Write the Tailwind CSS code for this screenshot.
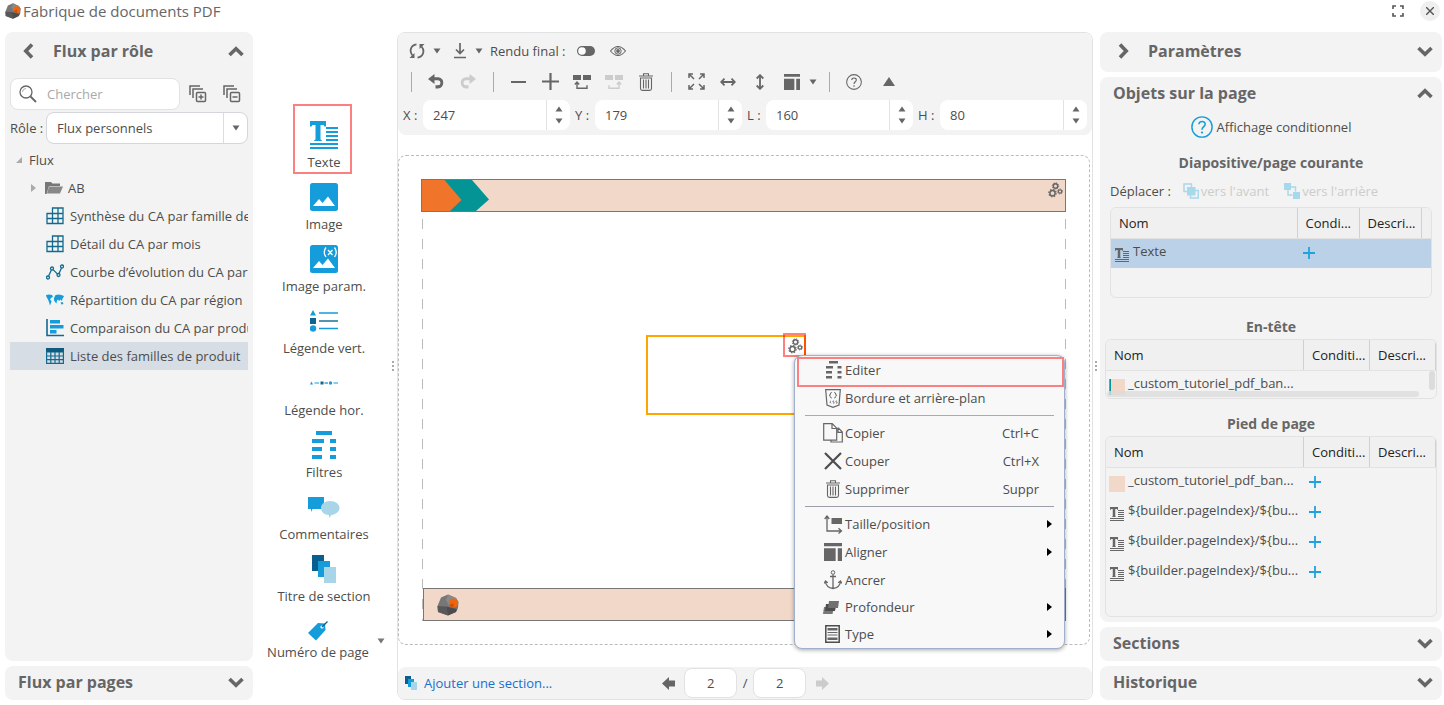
<!DOCTYPE html>
<html lang="fr">
<head>
<meta charset="utf-8">
<title>Fabrique de documents PDF</title>
<script src="https://cdn.jsdelivr.net/npm/@tailwindcss/browser@4"></script>
</head>
<body class="h-screen overflow-hidden bg-white font-['Open_Sans','Noto_Sans',sans-serif] text-[13px] leading-5 text-[#4d4d4d]">

<svg class="hidden" aria-hidden="true">
  <symbol id="cube" viewBox="0 0 22 22"><path fill="#777" d="M4 3.500 11 .5l8 3.500 2.500 4L21 14l-2 4-8 3.500L1 18 .5 12z"/><path fill="#8a8a8a" d="M11 .5 19 4l2.500 4-9 4.500L9 6z"/><path fill="#585858" d="M.5 12 9 12.500l2 9L1 18z"/><path fill="#4c4c4c" d="M9 12.500 20 15l-1 3-8 3.500z"/><circle cx="16.500" cy="9" r="4.600" fill="#ee6510"/><path fill="#c94f0a" d="M16.500 9v4.600A4.600 4.600 0 0 1 12.300 11z"/></symbol>
  <symbol id="up" viewBox="0 0 16 11"><path d="M1.500 9 8 2.800 14.500 9" fill="none" stroke="currentColor" stroke-width="3.600"/></symbol>
  <symbol id="down" viewBox="0 0 16 11"><path d="M1.500 2 8 8.200 14.500 2" fill="none" stroke="currentColor" stroke-width="3.600"/></symbol>
  <symbol id="left" viewBox="0 0 11 16"><path d="M9 1.500 2.800 8 9 14.500" fill="none" stroke="currentColor" stroke-width="3.600"/></symbol>
  <symbol id="right" viewBox="0 0 11 16"><path d="M2 1.500 8.200 8 2 14.500" fill="none" stroke="currentColor" stroke-width="3.600"/></symbol>
  <symbol id="tri-down" viewBox="0 0 8 6"><path d="M.5.5h7L4 5.500z" fill="currentColor"/></symbol>
  <symbol id="tri-up" viewBox="0 0 8 6"><path d="M.5 5.500h7L4 .5z" fill="currentColor"/></symbol>
  <symbol id="tri-right" viewBox="0 0 5 8"><path d="M0 0 5 4 0 8z" fill="currentColor"/></symbol>
  <symbol id="stack" viewBox="0 0 18 18"><g fill="none" stroke="currentColor" stroke-width="1.500"><path d="M1 10V1h10M4 13V4h10"/><rect x="7.500" y="7.500" width="9" height="9" rx="1"/></g></symbol>
  <symbol id="cubegrid" viewBox="0 0 18 18"><path fill="none" stroke="#126a8e" stroke-width="1.300" d="M6.500 1h10.500v15.500H1V6.500h5.500zM1 11.500h16M6.500 6.500H17M6.500 6.500v10M12 1v15.500"/></symbol>
  <symbol id="curve" viewBox="0 0 18 16"><g fill="none" stroke="#126a8e" stroke-width="1.300"><circle cx="2" cy="13.500" r="1.500"/><circle cx="6" cy="4.500" r="1.500"/><circle cx="12.500" cy="11" r="1.500"/><circle cx="16" cy="2.500" r="1.500"/><path d="M2.600 12 5.400 6M7 5.600l4.400 4.300M13 9.500l2.500-5.500"/></g></symbol>
  <symbol id="map" viewBox="0 0 18 12"><path fill="#149dda" d="M0 1 3 .5 6 1 7 2.500 5 4 4 5.500 5.500 7 5 9 4 11.500 3 8 2 5.500.5 3zM8 4l1.500-3L13 .5l4 1 1 1-1.500 2L16 7l-1.500-1.500L13 7 12 5.500 11 6.500 10.500 9.500 9 8 8 6zM14.500 8.500l2-.5 1 2-2 .5z"/></symbol>
  <symbol id="bars" viewBox="0 0 18 18"><path d="M1 0v16.500h17" fill="none" stroke="#126a8e" stroke-width="1.600"/><path fill="#149dda" d="M4 1h10v3.500H4zM4 6h13.500v3.500H4zM4 11h6.500v3.500H4z"/></symbol>
  <symbol id="table" viewBox="0 0 18 16"><path fill="#0d5c80" d="M0 0h18v4.500H0z"/><path fill="none" stroke="#126a8e" stroke-width="1.200" d="M.6 3v12.400h16.800V3M.6 8h16.800M.6 11.700h16.800M4.800 4v12M9 4v12M13.200 4v12"/></symbol>
  <symbol id="text" viewBox="0 0 28 28"><path fill="currentColor" d="M0 0h16v5.500h-1.500L13.500 4h-3v14.500l1.500 1V20H4v-.5l1.500-1V4h-3L1.500 5.500H0zM16 6h12v2H16zM16 10h12v2H16zM16 14h12v2H16zM16 18h12v2H16zM0 22h28v2H0zM0 26h28v2H0z"/></symbol>
  <symbol id="image" viewBox="0 0 28 28"><rect width="28" height="28" rx="2.500" fill="#149dda"/><path fill="#fff" d="m3 23 6-7 3.500 4L18 13.500 25 23z"/></symbol>
  <symbol id="filter" viewBox="0 0 24 28"><path fill="currentColor" d="M4 0h16v4H4zM0 8h12v4H0zM0 16h10v4H0zM0 24h10v4H0zM18 8h6v4h-6zM18 16h6v4h-6zM18 24h6v4h-6z"/></symbol>
  <symbol id="pages" viewBox="0 0 24 28"><path fill="#09608f" d="M0 0h12v16H0z"/><path fill="#149dda" d="M6 6h12v16H6z"/><path fill="#a8d5e8" d="M12 12h12v16H12z"/></symbol>
  <symbol id="undo" viewBox="0 0 16 15"><path fill="currentColor" d="M0 5 6.500 0v3.200h4A5.700 5.700 0 0 1 10 14.500H7.500V11.300H10a2.500 2.500 0 0 0 0-5H6.500V10z"/></symbol>
  <symbol id="split" viewBox="0 0 18 14"><path fill="currentColor" d="M0 0h8v5H0zM10 0h8v5h-8z"/><path fill="none" stroke="currentColor" stroke-width="1.400" d="M4 8.500v4.800h10v-3M1.800 9.500 4 7l2.200 2.500"/></symbol>
  <symbol id="trash" viewBox="0 0 14 18"><g fill="none" stroke="currentColor" stroke-width="1.100"><path d="M0 3h14M4.500 2.800V.7h5v2.100M1.500 5h11v10.500q0 1.900-1.900 1.900H3.400q-1.900 0-1.900-1.900zM4.500 6.500v9M7 6.500v9M9.500 6.500v9"/></g></symbol>
  <symbol id="align" viewBox="0 0 17 17"><path fill="currentColor" d="M0 0h17v3H0zM0 5h11v12H0zM13 5h4v12h-4z"/></symbol>
  <symbol id="help" viewBox="0 0 20 20"><circle cx="10" cy="10" r="9.200" fill="none" stroke="currentColor" stroke-width="1.300"/><path fill="none" stroke="currentColor" stroke-width="1.400" d="M7.200 7.500c0-3.500 5.800-3.300 5.700 0 0 2.200-2.900 2.300-2.900 5"/><circle cx="10" cy="15" r="1" fill="currentColor"/></symbol>
  <symbol id="gears" viewBox="0 0 16 16"><g fill="none" stroke="currentColor"><circle cx="7.500" cy="4" r="2.200" stroke-width="1.400"/><circle cx="7.500" cy="4" r="3.200" stroke-width="1" stroke-dasharray="1.260 1.260"/><circle cx="4.500" cy="11.200" r="2.600" stroke-width="1.500"/><circle cx="4.500" cy="11.200" r="3.700" stroke-width="1.200" stroke-dasharray="1.450 1.450"/><circle cx="12" cy="9.500" r="1.700" stroke-width="1.200"/><circle cx="12" cy="9.500" r="2.500" stroke-width="1" stroke-dasharray=".980 .980"/></g></symbol>
  <symbol id="arrow-left" viewBox="0 0 13 13"><path fill="currentColor" d="M0 6.500 7 0v3.500h6v6H7V13z"/></symbol>
  <symbol id="plus" viewBox="0 0 12 12"><path d="M6 0v12M0 6h12" stroke="#1fa3de" stroke-width="1.800"/></symbol>
</svg>

<div class="flex h-full flex-col pb-[5px]">
  <header class="flex h-8 shrink-0 items-start justify-between pl-[5px] pr-1">
    <h1 class="flex items-center gap-[2px] text-[15px] leading-[22px] text-[#666]"><svg class="size-4"><use href="#cube"/></svg>Fabrique de documents PDF</h1>
    <div class="flex items-center gap-4 pt-[1px]">
      <button aria-label="Plein écran"><svg class="size-3" viewBox="0 0 12 12"><path d="M1 4V1h3M8 1h3v3M11 8v3H8M4 11H1V8" fill="none" stroke="#555" stroke-width="1.600"/></svg></button>
      <button aria-label="Fermer" class="flex size-5 items-center justify-center rounded-full bg-[#efefef]"><svg class="size-2" viewBox="0 0 8 8"><path d="m0 0 8 8M8 0 0 8" stroke="#555" stroke-width="1.400"/></svg></button>
    </div>
  </header>

  <main class="flex min-h-0 flex-1 pl-[5px] pr-[2px]">
    <!-- Flows -->
    <aside class="flex w-[248px] shrink-0 flex-col gap-[5px]">
      <section class="flex min-h-0 flex-1 flex-col rounded-lg bg-[#f3f3f3] px-[5px]">
        <div class="flex h-[38px] shrink-0 items-center pl-[13px] pr-1 text-[#666]">
          <button aria-label="Retour"><svg class="h-4 w-[11px]"><use href="#left"/></svg></button>
          <h2 class="ml-[19px] flex-1 text-base font-bold">Flux par rôle</h2>
          <button aria-label="Replier"><svg class="h-[11px] w-4"><use href="#up"/></svg></button>
        </div>
        <div class="mt-2 flex items-center text-[#666]">
          <label class="flex h-8 w-[170px] items-center rounded-lg border border-[#e2e2e2] bg-white pl-2">
            <svg class="size-[18px] shrink-0" viewBox="0 0 18 18"><circle cx="7" cy="7" r="6" fill="none" stroke="currentColor" stroke-width="1.300"/><path d="M3.500 7A3.500 3.500 0 0 1 7 3.500" fill="none" stroke="#aaa"/><path d="m11.500 11.500 5.500 5.500" stroke="currentColor" stroke-width="1.800"/></svg>
            <input type="text" aria-label="Chercher" placeholder="Chercher" class="ml-[10px] w-28 outline-none placeholder:text-[#a9a9a9]">
          </label>
          <button aria-label="Tout déplier" class="ml-[9px]"><svg class="size-[18px]"><use href="#stack"/><path d="M9.500 12h5M12 9.500v5" stroke="currentColor" stroke-width="1.500"/></svg></button>
          <button aria-label="Tout replier" class="ml-4"><svg class="size-[18px]"><use href="#stack"/><path d="M9.500 12h5" stroke="currentColor" stroke-width="1.500"/></svg></button>
        </div>
        <div class="mt-[2px] flex items-center">
          <label for="role" class="w-9">Rôle :</label>
          <div class="relative flex-1">
            <select id="role" class="block h-8 w-full appearance-none rounded-lg border border-[#d5d5dc] bg-white pl-[10px] text-[#4d4d4d]"><option>Flux personnels</option></select>
            <span class="pointer-events-none absolute inset-y-px right-px flex w-6 items-center justify-center border-l border-[#ddd] text-[#666]"><svg class="h-[6px] w-2"><use href="#tri-down"/></svg></span>
          </div>
        </div>
        <ul class="mt-[2px] overflow-hidden whitespace-nowrap [&>li]:flex [&>li]:h-7 [&>li]:items-center">
          <li class="pl-[6px]"><svg class="mr-[7px] size-[6px]" viewBox="0 0 6 6"><path d="M6 0v6H0z" fill="#aaa"/></svg>Flux</li>
          <li class="pl-[21px]"><svg class="mr-[9px] h-2 w-[5px] text-[#aaa]"><use href="#tri-right"/></svg><svg class="mr-[5px] h-3 w-[18px]" viewBox="0 0 18 12"><path fill="#777" d="M0 0h6l1.500 1.500H15V4H4L1.500 12H0z"/><path fill="#888" d="M4 4.500h14L15 11.500H2z"/></svg>AB</li>
          <li class="gap-[6px] pl-9"><svg class="size-[18px] shrink-0"><use href="#cubegrid"/></svg>Synthèse du CA par famille de produit</li>
          <li class="gap-[6px] pl-9"><svg class="size-[18px] shrink-0"><use href="#cubegrid"/></svg>Détail du CA par mois</li>
          <li class="gap-[6px] pl-9"><svg class="h-4 w-[18px] shrink-0"><use href="#curve"/></svg>Courbe d’évolution du CA par mois</li>
          <li class="gap-[6px] pl-9"><svg class="h-3 w-[18px] shrink-0"><use href="#map"/></svg>Répartition du CA par région</li>
          <li class="gap-[6px] pl-9"><svg class="size-[18px] shrink-0"><use href="#bars"/></svg>Comparaison du CA par produit</li>
          <li class="gap-[6px] bg-[#d6dde5] pl-9"><svg class="h-4 w-[18px] shrink-0"><use href="#table"/></svg>Liste des familles de produit</li>
        </ul>
      </section>
      <section class="flex h-[34px] shrink-0 items-center justify-between rounded-lg bg-[#f3f3f3] pb-[2px] pl-[13px] pr-[9px] text-[#666]">
        <h2 class="text-base font-bold">Flux par pages</h2>
        <button aria-label="Déplier"><svg class="h-[11px] w-4"><use href="#down"/></svg></button>
      </section>
    </aside>

    <!-- Object palette -->
    <nav aria-label="Objets" class="relative w-[142px] shrink-0 pt-[79px] [&>button]:flex [&>button]:w-full [&>button]:flex-col [&>button]:items-center [&>button]:gap-[3px] [&>button]:pt-[10px] [&>button]:pb-px">
      <button><svg class="size-7 text-[#149dda]"><use href="#text"/></svg>Texte</button>
      <button><svg class="size-7"><use href="#image"/></svg>Image</button>
      <button><svg class="size-7"><use href="#image"/><g fill="none" stroke="#fff" stroke-width="1.300"><path d="M16 2.500q-3.500 4.500 0 9.500M24.500 2.500q3.500 4.500 0 9.500M18 5l4.500 5M22.500 5 18 10"/></g></svg>Image param.</button>
      <button><svg class="size-7" viewBox="0 0 28 28"><path fill="#149dda" d="m3 3 3 5.500H0z"/><path fill="#0b678f" d="M0 11h6v6H0z"/><circle cx="3" cy="21.500" r="3.200" fill="#149dda"/><path d="M9 6h20M9 21.500h20" stroke="#149dda" stroke-width="1.400"/><path d="M9 14h20" stroke="#0b678f" stroke-width="1.400"/></svg>Légende vert.</button>
      <button><svg class="size-7" viewBox="0 0 28 28"><path fill="#149dda" d="m1.500 12.500 1.500 3H0z"/><path fill="#0b678f" d="M10.500 12.500h3v3h-3z"/><circle cx="20.500" cy="14" r="1.700" fill="#149dda"/><path d="M4.500 14H9M23.500 14H28" stroke="#149dda"/><path d="M14.500 14H18" stroke="#0b678f"/></svg>Légende hor.</button>
      <button><svg class="h-7 w-6 text-[#149dda]"><use href="#filter"/></svg>Filtres</button>
      <button><svg class="h-7 w-8" viewBox="0 0 32 28"><path fill="#149dda" d="M0 4h16v12H4.500L3 19v-3H0z"/><path fill="#a8d5e8" d="M22 8c5.500 0 9.500 3 9.500 7S27.500 21.500 23.500 22L21 25v-3c-4.500 0-8-3-8-7s4-7 9-7z"/></svg>Commentaires</button>
      <button><svg class="h-7 w-6"><use href="#pages"/></svg>Titre de section</button>
      <button class="pr-3"><svg class="mt-1 size-5" viewBox="0 0 20 20"><path fill="#149dda" d="M0 12 10 2l7 .5.500 6.500L8 19.500z"/><circle cx="14" cy="6" r="1.600" fill="#fff"/><path d="m14 6 5.500-5.500" stroke="#09608f" stroke-width="1.300"/></svg><span class="-mt-[2px]">Numéro de page</span></button>
      <span aria-hidden="true" class="absolute left-10 top-[72px] h-[70px] w-[59px] border-2 border-[#fd8080]"></span>
      <svg class="absolute left-[124px] top-[606px] h-[6px] w-2 text-[#777]"><use href="#tri-down"/></svg>
      <svg class="absolute right-[1px] top-[329px] h-[11px] w-[3px]" viewBox="0 0 3 11"><path fill="#aaa" d="M1 0h2v2H1zM1 4h2v2H1zM1 8h2v2H1z"/></svg>
    </nav>

    <!-- Editor -->
    <section class="ml-[2px] flex min-w-0 flex-1 flex-col rounded-lg border border-[#e2e2e2]">
      <div class="rounded-lg bg-[#f3f3f3] text-[#666]">
        <div class="flex h-[35px] items-center pl-[11px]">
          <button aria-label="Actualiser"><svg class="size-4" viewBox="0 0 16 16"><g fill="none" stroke="currentColor" stroke-width="1.800"><path d="M7.500 1.300C1.500 2 0 8.500 3.500 12.500M8.500 14.700C14.500 14 16 7.500 12.500 3.500"/></g><path fill="currentColor" d="M.5 15 5.500 10v5zM15.500 1l-5 5V1z"/></svg></button>
          <svg class="ml-2 h-[6px] w-2"><use href="#tri-down"/></svg>
          <button aria-label="Télécharger" class="ml-3"><svg class="h-4 w-[14px]" viewBox="0 0 14 16"><path d="M7 0v10M3 6.500 7 10.500l4-4M1 14.500h12" fill="none" stroke="currentColor" stroke-width="1.700"/></svg></button>
          <svg class="ml-2 h-[6px] w-2"><use href="#tri-down"/></svg>
          <span class="ml-[7px] text-[#4d4d4d]">Rendu final :</span>
          <button aria-label="Rendu final" class="ml-[11px]"><svg class="h-[10px] w-[18px]" viewBox="0 0 18 10"><rect width="18" height="10" rx="5" fill="currentColor"/><circle cx="5" cy="5" r="3.800" fill="#fff"/></svg></button>
          <button aria-label="Aperçu" class="ml-[15px]"><svg class="h-[10px] w-4" viewBox="0 0 16 10"><path d="M.5 5q7.500-9 15 0-7.500 9-15 0z" fill="none" stroke="currentColor" stroke-width="1.100"/><circle cx="8" cy="5" r="3.200" fill="none" stroke="currentColor"/><circle cx="8" cy="5" r="1.900" fill="currentColor"/></svg></button>
        </div>
        <div class="flex h-[27px] items-center pl-[13px]">
          <i class="h-5 w-px bg-[#aaa]"></i>
          <button aria-label="Annuler" class="ml-4"><svg class="h-[15px] w-4"><use href="#undo"/></svg></button>
          <button aria-label="Rétablir" class="ml-4 text-[#ccc]"><svg class="h-[15px] w-4 -scale-x-100"><use href="#undo"/></svg></button>
          <i class="ml-[17px] h-5 w-px bg-[#aaa]"></i>
          <button aria-label="Dézoomer" class="ml-[17px]"><svg class="h-4 w-[15px]"><path d="M0 8h15" stroke="currentColor" stroke-width="2"/></svg></button>
          <button aria-label="Zoomer" class="ml-4"><svg class="size-[17px]"><path d="M0 8.500h17M8.500 0v17" stroke="currentColor" stroke-width="2.200"/></svg></button>
          <button aria-label="Dupliquer avant" class="ml-[14px]"><svg class="h-[14px] w-[18px]"><use href="#split"/></svg></button>
          <button aria-label="Dupliquer après" class="ml-[14px] text-[#ccc]"><svg class="h-[14px] w-[18px] -scale-x-100"><use href="#split"/></svg></button>
          <button aria-label="Supprimer" class="ml-4"><svg class="h-[18px] w-[14px]"><use href="#trash"/></svg></button>
          <i class="ml-[18px] h-5 w-px bg-[#aaa]"></i>
          <button aria-label="Ajuster" class="ml-4"><svg class="size-[17px]" viewBox="0 0 17 17"><path d="M1 5V1h4M1 1l5 5M12 1h4v4M16 1l-5 5M16 12v4h-4M16 16l-5-5M5 16H1v-4M1 16l5-5" fill="none" stroke="currentColor" stroke-width="1.500"/></svg></button>
          <button aria-label="Ajuster en largeur" class="ml-[15px]"><svg class="h-2 w-4" viewBox="0 0 16 8"><path d="M2 4h12M4.500.7 1.200 4l3.300 3.300M11.500.7 14.800 4l-3.300 3.300" fill="none" stroke="currentColor" stroke-width="1.800"/></svg></button>
          <button aria-label="Ajuster en hauteur" class="ml-5"><svg class="h-4 w-2" viewBox="0 0 8 16"><path d="M4 2v12M.7 4.500 4 1.200l3.300 3.300M.7 11.500 4 14.800l3.300-3.300" fill="none" stroke="currentColor" stroke-width="1.800"/></svg></button>
          <button aria-label="Aligner" class="ml-5"><svg class="h-4 w-4"><use href="#align"/></svg></button>
          <svg class="ml-[9px] h-[6px] w-2"><use href="#tri-down"/></svg>
          <i class="ml-3 h-5 w-px bg-[#aaa]"></i>
          <button aria-label="Aide" class="ml-4"><svg class="size-4"><use href="#help"/></svg></button>
          <button aria-label="Masquer" class="ml-[21px]"><svg class="h-[9px] w-3" viewBox="0 0 12 9"><path d="M6 0l6 9H0z" fill="currentColor"/></svg></button>
        </div>
        <div class="flex py-[5px] pl-[5px] pr-[5px] text-[#4d4d4d]">
          <div class="flex flex-auto items-center"><label for="px" class="w-5">X :</label><div class="flex h-[30px] flex-1 rounded-lg bg-white"><input id="px" value="247" class="w-0 flex-1 pl-[10px] outline-none"><span class="flex w-6 flex-col items-center justify-evenly border-l border-[#e2e2e2] text-[#666]"><button aria-label="X plus" class="flex"><svg class="h-[6px] w-2"><use href="#tri-up"/></svg></button><button aria-label="X moins" class="flex"><svg class="h-[6px] w-2"><use href="#tri-down"/></svg></button></span></div></div>
          <div class="ml-[5px] flex flex-auto items-center"><label for="py" class="w-5">Y :</label><div class="flex h-[30px] flex-1 rounded-lg bg-white"><input id="py" value="179" class="w-0 flex-1 pl-[10px] outline-none"><span class="flex w-6 flex-col items-center justify-evenly border-l border-[#e2e2e2] text-[#666]"><button aria-label="Y plus" class="flex"><svg class="h-[6px] w-2"><use href="#tri-up"/></svg></button><button aria-label="Y moins" class="flex"><svg class="h-[6px] w-2"><use href="#tri-down"/></svg></button></span></div></div>
          <div class="ml-[5px] flex flex-auto items-center"><label for="pl" class="w-[19px]">L :</label><div class="flex h-[30px] flex-1 rounded-lg bg-white"><input id="pl" value="160" class="w-0 flex-1 pl-[10px] outline-none"><span class="flex w-6 flex-col items-center justify-evenly border-l border-[#e2e2e2] text-[#666]"><button aria-label="L plus" class="flex"><svg class="h-[6px] w-2"><use href="#tri-up"/></svg></button><button aria-label="L moins" class="flex"><svg class="h-[6px] w-2"><use href="#tri-down"/></svg></button></span></div></div>
          <div class="ml-[5px] flex flex-auto items-center"><label for="ph" class="w-[22px]">H :</label><div class="flex h-[30px] flex-1 rounded-lg bg-white"><input id="ph" value="80" class="w-0 flex-1 pl-[10px] outline-none"><span class="flex w-6 flex-col items-center justify-evenly border-l border-[#e2e2e2] text-[#666]"><button aria-label="H plus" class="flex"><svg class="h-[6px] w-2"><use href="#tri-up"/></svg></button><button aria-label="H moins" class="flex"><svg class="h-[6px] w-2"><use href="#tri-down"/></svg></button></span></div></div>
        </div>
      </div>

      <!-- Free canvas -->
      <div class="relative mb-[22px] mr-[2px] mt-5 min-h-0 flex-1 rounded-lg border border-dashed border-[#bbb]">
        <div class="absolute bottom-[23px] left-[23px] right-[23px] top-[63px] bg-[repeating-linear-gradient(to_bottom,#bbb_0_10px,transparent_10px_20px),repeating-linear-gradient(to_bottom,#bbb_0_10px,transparent_10px_20px)] bg-[length:1px_100%,1px_100%] bg-[position:left_top,right_top] bg-no-repeat"></div>
        <div class="absolute left-[22px] right-[23px] top-[23px] h-[33px] border border-[#777] bg-[#f2d8c9] text-[#666]">
          <svg class="h-[31px] w-[68px]"><path fill="#059495" d="M20 0h30l17 19.500L54 31H20z"/><path fill="#f0752a" d="M0 0h22.500L39.500 20 28 31H0z"/></svg>
          <svg class="absolute right-px top-[2px] size-4"><use href="#gears"/></svg>
        </div>
        <div class="absolute bottom-[23px] left-6 right-[23px] flex h-[33px] items-center border border-[#777] bg-[#f2d8c9] pl-[13px]"><svg class="size-[22px]"><use href="#cube"/></svg></div>
        <div class="absolute left-[247px] top-[179px] h-20 w-40 border-2 border-[#ffa500]">
          <svg class="absolute right-0 top-px size-4 text-[#666]"><use href="#gears"/></svg>
        </div>
        <span class="absolute left-[384px] top-[177px] h-6 w-[23px] border-2 border-[#ff0000]/50"></span>

        <div role="menu" class="absolute left-[395px] top-[199px] w-[271px] rounded-lg border border-[#a0b0cc] bg-[#f8f8f8] shadow-[0_1px_4px_rgba(0,0,0,0.35)] [&>button]:flex [&>button]:w-full [&>button]:items-center [&>button]:pl-7 [&>button]:pr-3 [&>button>svg:first-child]:shrink-0">
          <button role="menuitem" class="h-7"><svg class="mx-[2px] h-[18px] w-[18px] text-[#666]" viewBox="0 0 18 18"><path fill="currentColor" d="M4 0h9v2.500H4zM1 5h7v2.500H1zM1 10h6v2.500H1zM1 15h6v2.500H1zM12.500 5h4v2.500h-4zM12.500 10h4v2.500h-4zM12.500 15h4v2.500h-4z"/></svg>Editer</button>
          <button role="menuitem" class="h-7"><svg class="ml-[2px] mr-1 h-[19px] w-4 text-[#666]" viewBox="0 0 16 19"><path d="M.7.7h14.600L14 16 8 18.300 2 16z" fill="none" stroke="currentColor" stroke-width="1.200"/><path d="M6.800 3.500q-1.500 0-1.500 1.500t-1 1.300q1 0 1 1.300T6.800 9M9.200 3.500q1.500 0 1.500 1.500t1 1.300q-1 0-1 1.300T9.200 9" fill="none" stroke="currentColor"/><path d="M6 11.800q-2.300 1 0 2.500M9 11.800q-2.500.8-.5 1.300t-.5 1.300M12 11.800q-2.500.8-.5 1.300t-.5 1.300" fill="none" stroke="currentColor" stroke-width=".8"/></svg>Bordure et arrière-plan</button>
          <hr class="mx-[10px] my-[3px] border-[#aaa]">
          <button role="menuitem" class="h-7"><svg class="mr-[2px] h-5 w-5 text-[#666]" viewBox="0 0 20 20"><path d="M.7.7h8.500l4.500 4.500v12H.7zM9 .7v4.800h4.700M14.500 5h1l3.800 4v10H8v-2M15 5v4.300h4.300" fill="none" stroke="currentColor" stroke-width="1.200"/></svg>Copier<span class="ml-auto pr-[13px]">Ctrl+C</span></button>
          <button role="menuitem" class="h-7"><svg class="ml-px mr-[3px] size-[18px]" viewBox="0 0 18 18"><path d="m1 1 16 16M17 1 1 17" stroke="currentColor" stroke-width="2.200"/></svg>Couper<span class="ml-auto pr-[13px]">Ctrl+X</span></button>
          <button role="menuitem" class="h-7"><svg class="ml-[3px] mr-[5px] h-[18px] w-[14px] text-[#666]"><use href="#trash"/></svg>Supprimer<span class="ml-auto pr-[13px]">Suppr</span></button>
          <hr class="mx-[10px] my-[3px] border-[#9a9fa8]">
          <button role="menuitem" class="h-7"><svg class="ml-px mr-[2px] size-[19px] text-[#666]" viewBox="0 0 19 19"><path d="M3 1v15h14M.7 4 3 1l2.300 3M14.500 13.200l3 2.800-3 2.500" fill="none" stroke="currentColor" stroke-width="1.300"/><path fill="currentColor" d="M7.500 3H18v6H7.500z"/></svg>Taille/position<svg class="ml-auto h-2 w-[5px] text-black"><use href="#tri-right"/></svg></button>
          <button role="menuitem" class="h-7"><svg class="ml-px mr-[3px] size-[18px] text-[#666]"><use href="#align"/></svg>Aligner<svg class="ml-auto h-2 w-[5px] text-black"><use href="#tri-right"/></svg></button>
          <button role="menuitem" class="h-7"><svg class="ml-px mr-[3px] h-5 w-[18px] text-[#666]" viewBox="0 0 18 20"><circle cx="9" cy="2.500" r="1.800" fill="none" stroke="currentColor"/><path d="M9 4.500V18M6 6.500h6M1.500 11.500C2 16 5 18 9 18.500c4-.5 7-2.500 7.500-7M.3 13.500l1.200-2.500 2.300 1.700M17.700 13.500 16.500 11l-2.300 1.700" fill="none" stroke="currentColor" stroke-width="1.300"/></svg>Ancrer</button>
          <button role="menuitem" class="h-[26px]"><svg class="mr-[6px] h-[13px] w-4" viewBox="0 0 16 13"><path fill="#777" d="M1 6h10l-1.500 7H0z"/><path fill="#4d4d4d" d="M3 3h10.500L12 10H2z"/><path fill="#707070" d="M6 0h10l-1 7H5z"/></svg>Profondeur<svg class="ml-auto h-2 w-[5px] text-black"><use href="#tri-right"/></svg></button>
          <button role="menuitem" class="h-7"><svg class="ml-[2px] mr-[5px] h-[18px] w-[15px]" viewBox="0 0 15 18"><path fill="none" stroke="#4d4d4d" stroke-width="1.500" d="M.8.8h13.400v16.400H.8z"/><path fill="#666" d="M2.500 3h10v2.500h-10zM2.500 7h10v1h-10zM2.500 9.500h10v1h-10zM2.500 12.500h10V15h-10z"/></svg>Type<svg class="ml-auto h-2 w-[5px] text-black"><use href="#tri-right"/></svg></button>
          <span aria-hidden="true" class="pointer-events-none absolute left-[2px] top-[1px] h-[30px] w-[267px] border-2 border-[#fd8080]"></span>
        </div>
      </div>

      <footer class="flex h-8 items-center rounded-lg bg-[#f3f3f3] pl-[7px]">
        <a href="#" class="flex items-center gap-[7px] pb-px text-[#1a6fd0]"><svg class="h-[14px] w-3"><use href="#pages"/></svg>Ajouter une section...</a>
        <button aria-label="Page précédente" class="ml-[110px] text-[#666]"><svg class="size-[13px]"><use href="#arrow-left"/></svg></button>
        <input aria-label="Page" value="2" class="ml-[9px] h-[30px] w-[53px] rounded-lg border border-[#e2e2e2] bg-white text-center">
        <span class="w-4 text-center">/</span>
        <input aria-label="Nombre de pages" value="2" class="h-[30px] w-[53px] rounded-lg border border-[#e2e2e2] bg-white text-center">
        <button aria-label="Page suivante" class="ml-[10px] text-[#ccc]"><svg class="size-[13px] -scale-x-100"><use href="#arrow-left"/></svg></button>
      </footer>
    </section>

    <div class="flex w-[7px] shrink-0 justify-center pt-[329px]"><svg class="h-[11px] w-[3px]" viewBox="0 0 3 11"><path fill="#aaa" d="M0 0h2v2H0zM0 4h2v2H0zM0 8h2v2H0z"/></svg></div>

    <!-- Properties -->
    <aside class="flex w-[342px] shrink-0 flex-col gap-[5px] text-[#4d4d4d] [&_h2]:text-base [&_h2]:font-bold [&_h2]:text-[#666]">
      <section class="flex h-10 shrink-0 items-center rounded-lg bg-[#f3f3f3] pb-[2px] pl-[18px] pr-[9px] text-[#666]">
        <button aria-label="Avancer"><svg class="h-4 w-[11px]"><use href="#right"/></svg></button>
        <h2 class="ml-[19px] flex-1">Paramètres</h2>
        <button aria-label="Déplier"><svg class="h-[11px] w-4"><use href="#down"/></svg></button>
      </section>
      <section class="min-h-0 flex-1 overflow-hidden rounded-lg bg-[#f3f3f3] [&_h3]:text-center [&_h3]:text-sm [&_h3]:font-bold [&_h3]:text-[#666] [&_table]:w-full [&_table]:table-fixed [&_td]:truncate [&_th]:h-[30px] [&_th]:truncate [&_th]:border-b [&_th]:border-r [&_th]:border-b-[#e2e2e2] [&_th]:border-r-[#d0d0d0] [&_th]:bg-[#f0f0f0] [&_th]:pl-2 [&_th]:text-left [&_th]:font-normal [&_th]:text-[#222]">
        <div class="flex h-8 items-center justify-between pl-[13px] pr-[9px] text-[#666]">
          <h2>Objets sur la page</h2>
          <button aria-label="Replier"><svg class="h-[11px] w-4"><use href="#up"/></svg></button>
        </div>
        <div class="flex h-9 items-center justify-center gap-1"><svg class="size-[22px] text-[#149dda]"><use href="#help"/></svg>Affichage conditionnel</div>
        <h3 class="mt-2 leading-5">Diapositive/page courante</h3>
        <div class="mt-[6px] flex h-6 items-center pl-[10px]">Déplacer :
          <button class="ml-3 flex items-center gap-[2px] text-[#ccc]"><svg class="size-4" viewBox="0 0 16 16"><path d="M5 8.500H1V1h7.500v4M12 7.500h3.300V15H7.500v-3" fill="none" stroke="#a8d8ec" stroke-width="1.500"/><path fill="#a8d8ec" d="M4 4h8.500v8.500H4z"/></svg>vers l'avant</button>
          <button class="ml-[15px] flex items-center gap-[2px] text-[#ccc]"><svg class="size-4" viewBox="0 0 16 16"><path d="M7 4h4.500v4.500M4 7v5h4.500" fill="none" stroke="#a8d8ec" stroke-width="1.500"/><path fill="#a8d8ec" d="M0 0h7v7H0zM9 9h7v7H9z"/></svg>vers l'arrière</button>
        </div>
        <div class="ml-[10px] mr-[10px] mt-1 h-[91px] overflow-hidden rounded-md border border-[#e2e2e2]">
          <table>
            <colgroup><col><col class="w-[62px]"><col class="w-[62px]"><col class="w-[10px]"></colgroup>
            <thead><tr><th>Nom</th><th>Condi...</th><th>Descri...</th><th class="border-r-0! px-0!"></th></tr></thead>
            <tbody><tr class="h-[30px] bg-[#bad1e7]"><td class="pl-1"><span class="flex items-center gap-1"><svg class="mt-1 size-[14px] text-[#666]"><use href="#text"/></svg><span class="pb-1">Texte</span></span></td><td class="pl-[6px]"><svg class="size-3"><use href="#plus"/></svg></td><td></td><td></td></tr></tbody>
          </table>
        </div>
        <h3 class="mt-[19px] leading-5">En-tête</h3>
        <div class="relative mx-[5px] mt-[2px] h-[60px] overflow-hidden rounded-md border border-[#e2e2e2]">
          <table>
            <colgroup><col><col class="w-[66px]"><col class="w-[66px]"></colgroup>
            <thead><tr><th>Nom</th><th>Conditi...</th><th>Descri...</th></tr></thead>
            <tbody><tr class="h-[30px]"><td class="pl-[3px]"><span class="flex items-center gap-[3px]"><svg class="mt-1 size-4"><path fill="#f2d8c9" d="M0 0h16v16H0z"/><path fill="#f0752a" d="M0 0h1v16H0z"/><path fill="#059495" d="M1 0h1v16H1z"/></svg><span class="pb-1">_custom_tutoriel_pdf_ban...</span></span></td><td></td><td></td></tr></tbody>
          </table>
          <span class="absolute bottom-[1px] left-[1px] h-[6px] w-[312px] rounded-full bg-[#dcdcdc]/80"></span>
          <span class="absolute right-[1px] top-[31px] h-[19px] w-[6px] rounded-full bg-[#dcdcdc]"></span>
        </div>
        <h3 class="mt-[15px] leading-5">Pied de page</h3>
        <div class="mx-[5px] mt-[2px] h-[181px] overflow-hidden rounded-md border border-[#e2e2e2]">
          <table>
            <colgroup><col><col class="w-[66px]"><col class="w-[66px]"></colgroup>
            <thead><tr><th>Nom</th><th>Conditi...</th><th>Descri...</th></tr></thead>
            <tbody>
              <tr class="h-[30px]"><td class="pl-[3px]"><span class="flex items-center gap-[3px]"><svg class="mt-1 size-4"><path fill="#f2d8c9" d="M0 0h16v16H0z"/></svg><span class="pb-1">_custom_tutoriel_pdf_ban...</span></span></td><td class="pl-[5px]"><svg class="size-3"><use href="#plus"/></svg></td><td></td></tr>
              <tr class="h-[30px]"><td class="pl-1"><span class="flex items-center gap-1"><svg class="mt-1 size-[14px] text-[#666]"><use href="#text"/></svg><span class="pb-1">${builder.pageIndex}/${bu...</span></span></td><td class="pl-[5px]"><svg class="size-3"><use href="#plus"/></svg></td><td></td></tr>
              <tr class="h-[30px]"><td class="pl-1"><span class="flex items-center gap-1"><svg class="mt-1 size-[14px] text-[#666]"><use href="#text"/></svg><span class="pb-1">${builder.pageIndex}/${bu...</span></span></td><td class="pl-[5px]"><svg class="size-3"><use href="#plus"/></svg></td><td></td></tr>
              <tr class="h-[30px]"><td class="pl-1"><span class="flex items-center gap-1"><svg class="mt-1 size-[14px] text-[#666]"><use href="#text"/></svg><span class="pb-1">${builder.pageIndex}/${bu...</span></span></td><td class="pl-[5px]"><svg class="size-3"><use href="#plus"/></svg></td><td></td></tr>
            </tbody>
          </table>
        </div>
      </section>
      <section class="flex h-[34px] shrink-0 items-center justify-between rounded-lg bg-[#f3f3f3] pb-[2px] pl-[13px] pr-[9px] text-[#666]"><h2>Sections</h2><button aria-label="Déplier les sections"><svg class="h-[11px] w-4"><use href="#down"/></svg></button></section>
      <section class="flex h-[34px] shrink-0 items-center justify-between rounded-lg bg-[#f3f3f3] pb-[2px] pl-[13px] pr-[9px] text-[#666]"><h2>Historique</h2><button aria-label="Déplier l'historique"><svg class="h-[11px] w-4"><use href="#down"/></svg></button></section>
    </aside>
  </main>
</div>
</body>
</html>
